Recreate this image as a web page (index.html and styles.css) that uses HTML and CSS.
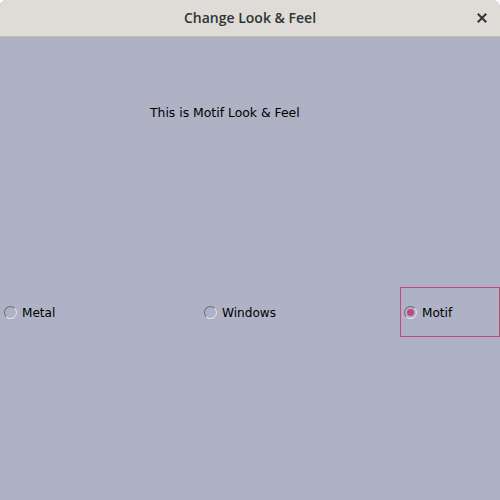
FILE: index.html
```html
<!DOCTYPE html>
<html>
<head>
<meta charset="utf-8">
<link rel="stylesheet" href="styles.css">
</head>
<body>
<div class="window">
  <div class="titlebar">
    <span class="title">Change Look &amp; Feel</span>
    <span class="close">
      <svg width="10" height="10" viewBox="0 0 10 10"><path d="M1.5 1.5L8.5 8.5M8.5 1.5L1.5 8.5" stroke="#2e3436" stroke-width="2" stroke-linecap="square"/></svg>
    </span>
  </div>
  <div class="content">
    <div class="label-row"><span class="label">This is Motif Look &amp; Feel</span></div>
    <div class="radios">
      <div class="radio"><span class="circle"></span><span class="rtext">Metal</span></div>
      <div class="radio"><span class="circle"></span><span class="rtext">Windows</span></div>
      <div class="radio focused"><span class="circle checked"></span><span class="rtext">Motif</span></div>
    </div>
  </div>
</div>
</body>
</html>
```
FILE: styles.css
```css
html, body {
  margin: 0;
  padding: 0;
  background: #ffffff;
}
.window {
  width: 500px;
  height: 500px;
  display: flex;
  flex-direction: column;
  background: #aeb2c4;
  border-radius: 6px 8px 0 0;
  overflow: hidden;
}
.titlebar {
  height: 36px;
  flex: 0 0 36px;
  background: #dfdcd7;
  border-bottom: 1px solid #c4bdb3;
  display: flex;
  align-items: center;
  justify-content: center;
  position: relative;
  font-family: "Open Sans", "DejaVu Sans", sans-serif;
}
.title {
  font-size: 14px;
  font-weight: 600;
  color: #2e3436;
  margin-top: -1px;
}
.close {
  position: absolute;
  right: 13px;
  top: 13px;
  width: 10px;
  height: 10px;
  display: flex;
}
.content {
  flex: 1;
  display: flex;
  flex-direction: column;
  font-family: "DejaVu Sans", sans-serif;
  font-size: 12px;
  color: #000;
  -webkit-font-smoothing: none;
}
.label-row {
  height: 24px;
  margin-top: 63px;
  padding-left: 150px;
  display: flex;
  align-items: center;
}
.label {
  font-size: 12.4px;
}
.radios {
  margin-top: 163px;
  display: grid;
  grid-template-columns: 200px 200px 100px;
  height: 50px;
}
.radio {
  display: flex;
  align-items: center;
  padding-left: 4px;
  box-sizing: border-box;
  height: 50px;
}
.radio.focused {
  border: 1px solid #c2497a;
  padding-left: 3px;
}
.circle {
  width: 13px;
  height: 13px;
  box-sizing: border-box;
  border-radius: 50%;
  border: 1px solid;
  border-color: #6a6d78 #dfe1e8 #eef0f4 #6a6d78;
  margin-right: 5px;
  display: flex;
  align-items: center;
  justify-content: center;
}
.circle.checked::after {
  content: "";
  width: 7px;
  height: 7px;
  border-radius: 50%;
  background: #c2497a;
}
.rtext {
  font-size: 12.1px;
  margin-top: 1px;
}
```
